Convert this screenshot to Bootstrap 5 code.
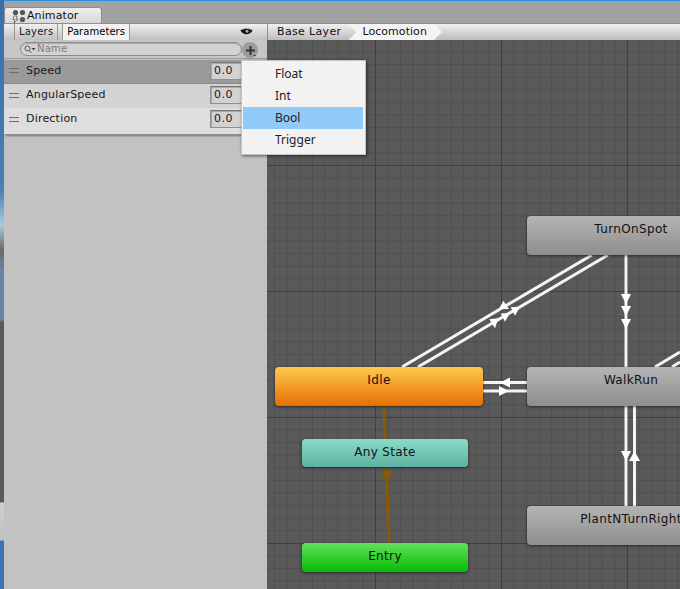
<!DOCTYPE html>
<html lang="en">
<head>
<meta charset="utf-8">
<title>Animator</title>
<link rel="stylesheet" href="https://cdn.jsdelivr.net/npm/bootstrap@5.3.0/dist/css/bootstrap.min.css">
<style>
html,body{height:100%;overflow:hidden;}
body{background:#3f74b0;font:11px/1.2 "DejaVu Sans",sans-serif;color:#111;}
.win{height:589px;width:680px;padding:1px 0 0 4px;background:linear-gradient(#2d8fe0 0 1px,#a2a2a2 1px);}
.deskstrip{position:absolute;left:0;top:0;width:4px;height:589px;background:linear-gradient(#3a6ea8 0,#4a7eb4 190px,#a5cbdf 225px,#6d6a66 250px,#6a83a5 270px,#6a83a5 320px,#5a5a5a 322px,#5a5a5a 502px,#d0d0d0 503px,#c0c0c0 540px,#3f74b0 541px,#3f74b0 100%);}
.tabstrip{height:22px;background:#a2a2a2;padding:6px 0 0 0;}
.wintab{width:98px;height:16px;background:linear-gradient(#efefef,#d8d8d8);border:1px solid #8e8e8e;border-bottom:0;border-radius:3px 3px 0 0;padding-left:7px;gap:1px;color:#111;letter-spacing:.1px;}
.mainrow{height:566px;}
.leftpane{width:263px;background:#c2c2c2;flex:none;}
.rightpane{width:413px;flex:none;}
.bartop{height:17px;background:linear-gradient(#f0f0f0,#c0c0c0);border-top:1px solid #8f8f8f;font-size:10px;}
.ltab{height:16px;padding:0 4px;color:#1a1a1a;border-left:1px solid #9a9a9a;border-right:1px solid #9a9a9a;line-height:15px;letter-spacing:.2px;}
.ltab-on{background:#f2f2f2;margin-left:4px;color:#000;letter-spacing:.05px;}
.ltabs{padding-left:10px;}
.eye{margin-left:auto;margin-right:14px;margin-top:3px;}
.searchrow{height:19px;background:#c6c6c6;padding:2px 0 0 16px;border-bottom:1px solid #9c9c9c;}
.pill{width:222px;height:14px;border:1px solid #8c8c8c;border-radius:7px;background:#d3d3d3;color:#7b7b7b;padding-left:3px;font-size:10px;letter-spacing:.2px;line-height:12px;box-shadow:inset 0 1px 1px #aaa;}
.plusbtn{width:16px;height:16px;border-radius:50%;background:#9c9c9c;color:#222;flex:none;}
.paramlist{border-bottom:2px solid #8d8d8d;border-radius:0 0 4px 4px;box-shadow:0 1px 1px #a8a8a8;margin-top:1px;}
.prow{height:24px;padding:0 26px 2px 5px;letter-spacing:.2px;gap:7px;color:#181818;}
.prow-a{background:#9a9a9a;border-bottom:1px solid #8a8a8a;}
.prow-b{background:#d4d4d4;}
.prow-c{background:#dedede;height:26px;padding-bottom:4px;}
.grip{width:10px;height:5px;border-top:1px solid #6e6e6e;border-bottom:1px solid #6e6e6e;flex:none;}
.numbox{margin-left:auto;width:31px;height:18px;background:#d2d2d2;border:1px solid #8f8f8f;border-right:0;border-top-color:#777;padding-left:3px;line-height:16px;letter-spacing:.5px;box-shadow:inset 1px 1px 0 #a8a8a8;}
.popmenu{position:absolute;left:241px;top:60px;width:125px;height:95px;background:#f2f2f2;border:1px solid #c4c4c4;padding:2px 2px 2px 1px;box-shadow:1px 1px 3px rgba(0,0,0,.55);font:12px/22px "Noto Sans",sans-serif;color:#222;z-index:5;}
.mitem{height:22px;padding-left:32px;}
.mitem-on{background:#91c9f7;}
.crumbs{height:17px;background:linear-gradient(#f0f0f0,#bdbdbd);border-top:1px solid #8f8f8f;border-left:1px solid #8f8f8f;line-height:15px;}
.crumb{padding-left:9px;padding-right:7px;letter-spacing:.35px;}
.crumb2{background:#f4f4f4;padding:0 15px 0 14px;letter-spacing:.05px;clip-path:polygon(0 0,calc(100% - 8px) 0,100% 50%,calc(100% - 8px) 100%,0 100%,8px 50%);}
.cvs{position:relative;height:549px;overflow:hidden;background-color:#595959;background-image:linear-gradient(#3f3f3f 1px,transparent 1px),linear-gradient(90deg,#3f3f3f 1px,transparent 1px),linear-gradient(#4f4f4f 1px,transparent 1px),linear-gradient(90deg,#4f4f4f 1px,transparent 1px);background-size:126px 126px,126px 126px,12.6px 12.6px,12.6px 12.6px;background-position:0 125px,108px 0,0 11.6px,7.2px 0;}
.edges{position:absolute;left:0;top:0;width:413px;height:549px;}
.node{position:absolute;border-radius:4px;text-align:center;color:#111;font-size:12px;letter-spacing:.35px;box-shadow:0 1px 3px rgba(0,0,0,.55);line-height:14px;padding-top:6px;}
.n-gray{background:linear-gradient(#b4b4b4,#8e8e8e);width:208px;height:39px;}
.n-idle{background:linear-gradient(#ffc94f,#e56f00);width:208px;height:39px;}
.n-any{background:linear-gradient(#8adcc5,#5fb2a3);width:166px;height:28px;}
.n-entry{background:linear-gradient(#62e25c,#05bb05);width:166px;height:29px;}
</style>
</head>
<body>
<div class="win position-relative">
  <div class="deskstrip"></div>
  <div class="tabstrip">
    <div class="wintab d-flex align-items-center">
      <svg width="14" height="14" viewBox="0 0 14 14"><circle cx="3.500" cy="3.500" r="2.600" fill="#555"/><circle cx="10.500" cy="3.500" r="2.600" fill="#555"/><circle cx="10.500" cy="10.500" r="2.600" fill="#555"/><path d="M2 7 5 7 3.800 10 6 10 2 14 3 10.600 1 10.600Z" fill="#fff" stroke="#444" stroke-width=".7"/></svg>
      <span>Animator</span>
    </div>
  </div>
  <div class="mainrow d-flex">
    <div class="leftpane">
      <div class="bartop d-flex align-items-start ltabs">
        <div class="ltab">Layers</div>
        <div class="ltab ltab-on">Parameters</div>
        <svg class="eye" width="13" height="9" viewBox="0 0 13 9"><path d="M.5 3.500C3 .5 10 .5 12.500 3.500 10 8.500 3 8.500.5 3.500Z" fill="#111"/><path d="M2 2.800C4.500 1 8.500 1 11 2.800" fill="none" stroke="#eee" stroke-width=".6"/><circle cx="7" cy="4.300" r="1.500" fill="#aaa"/></svg>
      </div>
      <div class="searchrow d-flex align-items-start">
        <div class="pill d-flex align-items-center">
          <svg width="13" height="9" viewBox="0 0 13 9" class="flex-none"><circle cx="3.500" cy="3.500" r="2.500" fill="none" stroke="#555"/><path d="M5.500 5.500 7.500 8" stroke="#555"/><path d="M7.500 3h4L9.500 5.500Z" fill="#444"/></svg>
          <span>Name</span>
        </div>
        <div class="plusbtn d-flex align-items-center justify-content-center">
          <svg width="13" height="13" viewBox="0 0 13 13"><path d="M5.500 2h2v3.500H11v2H7.500V11h-2V7.500H2v-2h3.500Z" fill="#333"/><path d="M9 11h3l-1.500 1.500Z" fill="#333"/></svg>
        </div>
      </div>
      <div class="paramlist">
        <div class="prow prow-a d-flex align-items-center"><span class="grip"></span><span>Speed</span><span class="numbox">0.0</span></div>
        <div class="prow prow-b d-flex align-items-center"><span class="grip"></span><span>AngularSpeed</span><span class="numbox">0.0</span></div>
        <div class="prow prow-c d-flex align-items-center"><span class="grip"></span><span>Direction</span><span class="numbox">0.0</span></div>
      </div>
    </div>
    <div class="rightpane">
      <div class="crumbs d-flex">
        <div class="crumb">Base Layer</div>
        <div class="crumb2">Locomotion</div>
      </div>
      <div class="cvs">
        <svg class="edges" viewBox="267 40 413 549">
          <g stroke="#f4f4f4" stroke-width="3" fill="none">
            <path d="M592 255 402 367M608 255 418 367M626 255V367M483 382.500H527M483 391H527M626 406V506M634.500 406V506M655 367 680 352M672 367 680 362"/>
          </g>
          <g fill="#fff">
            <path d="M503.300 300.700 509 309H499Z"/>
            <path d="M520 306.700 515 315.700 510.700 307.300Z"/>
            <path d="M510 313 505 321.700 500.700 313.600Z"/>
            <path d="M498.300 318.300 495 328.300 489.300 319.300Z"/>
            <path d="M621 294H631L626 304ZM621 306H631L626 316ZM621 319H631L626 329Z"/>
            <path d="M500 382.500 510 377.500V387.500ZM509 391 499 386V396Z"/>
            <path d="M621 451H631L626 461ZM634.500 451 640 461H629Z"/>
          </g>
          <g stroke="#8a5a00" stroke-width="3" fill="none"><path d="M384 406 385 439M386.500 470 389 543"/></g>
          <path d="M386.500 467 392 477H381Z" fill="#8a5a00"/>
        </svg>
        <div class="node n-gray" style="left:260px;top:176px">TurnOnSpot</div>
        <div class="node n-gray" style="left:260px;top:327px">WalkRun</div>
        <div class="node n-gray" style="left:260px;top:466px">PlantNTurnRight</div>
        <div class="node n-idle" style="left:8px;top:327px">Idle</div>
        <div class="node n-any" style="left:35px;top:399px">Any State</div>
        <div class="node n-entry" style="left:35px;top:503px">Entry</div>
      </div>
    </div>
  </div>
  <div class="popmenu">
    <div class="mitem">Float</div>
    <div class="mitem">Int</div>
    <div class="mitem mitem-on">Bool</div>
    <div class="mitem">Trigger</div>
  </div>
</div>
<script src="https://cdn.jsdelivr.net/npm/bootstrap@5.3.0/dist/js/bootstrap.bundle.min.js"></script>
</body>
</html>
